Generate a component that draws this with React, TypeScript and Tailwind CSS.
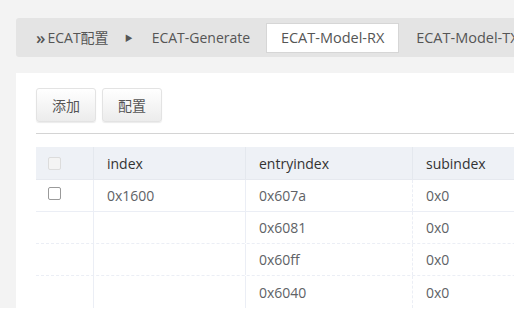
import React from "react";

const rows = [
  { check: true, index: "0x1600", entry: "0x607a", sub: "0x0" },
  { check: false, index: "", entry: "0x6081", sub: "0x0" },
  { check: false, index: "", entry: "0x60ff", sub: "0x0" },
  { check: false, index: "", entry: "0x6040", sub: "0x0" },
];

export default function App() {
  return (
    <div
      className="w-[514px] h-[331px] overflow-hidden bg-white text-[14px]"
      style={{ fontFamily: '"Open Sans", "Noto Sans CJK SC", sans-serif' }}
    >
      <div className="h-[308px] bg-[#f3f3f3] pl-4 pt-[18px] flex flex-col">
        <div className="h-[39px] bg-[#e4e4e4] rounded-l-[3px] flex items-center pl-5 text-[#555] whitespace-nowrap overflow-hidden">
          <span className="shrink-0 text-[#555] flex items-center">
            <span className="text-[17px] leading-none mr-[2px] font-semibold">»</span>ECAT配置
          </span>
          <span className="shrink-0 ml-[16px] text-[8px] text-[#555]">▶</span>
          <span className="shrink-0 ml-[19px]">ECAT-Generate</span>
          <span className="shrink-0 ml-[16px] w-[133px] h-[30px] flex items-center justify-center bg-white border border-[#d6d6d6] text-[#555] text-[14.5px]">
            ECAT-Model-RX
          </span>
          <span className="shrink-0 ml-[17px] text-[14.5px]">ECAT-Model-TX</span>
        </div>
        <div className="mt-4 flex-1 bg-white pl-5 pt-[15px] flex flex-col overflow-hidden">
          <div className="flex gap-[6px]">
            <button className="w-[60px] h-[34px] rounded-[3px] border border-[#e3e3e3] bg-gradient-to-b from-white to-[#ececec] text-[#555] shadow-[0_1px_1px_rgba(0,0,0,0.08)]">
              添加
            </button>
            <button className="w-[60px] h-[34px] rounded-[3px] border border-[#e3e3e3] bg-gradient-to-b from-white to-[#ececec] text-[#555] shadow-[0_1px_1px_rgba(0,0,0,0.08)]">
              配置
            </button>
          </div>
          <div className="mt-[11px] h-px bg-[#d4d4d4]" />
          <div className="mt-[13px] w-[600px] shrink-0">
            <div className="flex h-[33px] bg-[#eef1f6] text-[#333] border-b border-[#e6e9ef]">
              <div className="w-[58px] shrink-0 flex items-center pl-3 border-r border-[#e4e8ee]">
                <div className="w-[13px] h-[13px] rounded-[2px] border border-[#dcdcdc] bg-[#f4f4f4]" />
              </div>
              <div className="w-[152px] shrink-0 flex items-center pl-[13px] border-r border-[#e4e8ee]">index</div>
              <div className="w-[167px] shrink-0 flex items-center pl-[13px] border-r border-[#e4e8ee]">entryindex</div>
              <div className="flex-1 flex items-center pl-[13px]">subindex</div>
            </div>
            {rows.map((r, i) => (
              <div
                key={i}
                className={
                  "flex h-[32px] text-[#606266] " +
                  (i === 0 ? "border-b border-[#ebeef5]" : i < 3 ? "border-b border-dashed border-[#ebeef5]" : "")
                }
              >
                <div className="w-[58px] shrink-0 pl-3 pt-[7px] border-r border-[#ebeef5]">
                  {r.check && (
                    <div className="w-[13px] h-[13px] rounded-[2px] border border-[#9a9a9a] bg-white" />
                  )}
                </div>
                <div className="w-[152px] shrink-0 flex items-center pl-[13px] border-r border-[#ebeef5]">{r.index}</div>
                <div className="w-[167px] shrink-0 flex items-center pl-[13px] border-r border-dashed border-[#ebeef5]">{r.entry}</div>
                <div className="flex-1 flex items-center pl-[13px]">{r.sub}</div>
              </div>
            ))}
          </div>
        </div>
      </div>
    </div>
  );
}
